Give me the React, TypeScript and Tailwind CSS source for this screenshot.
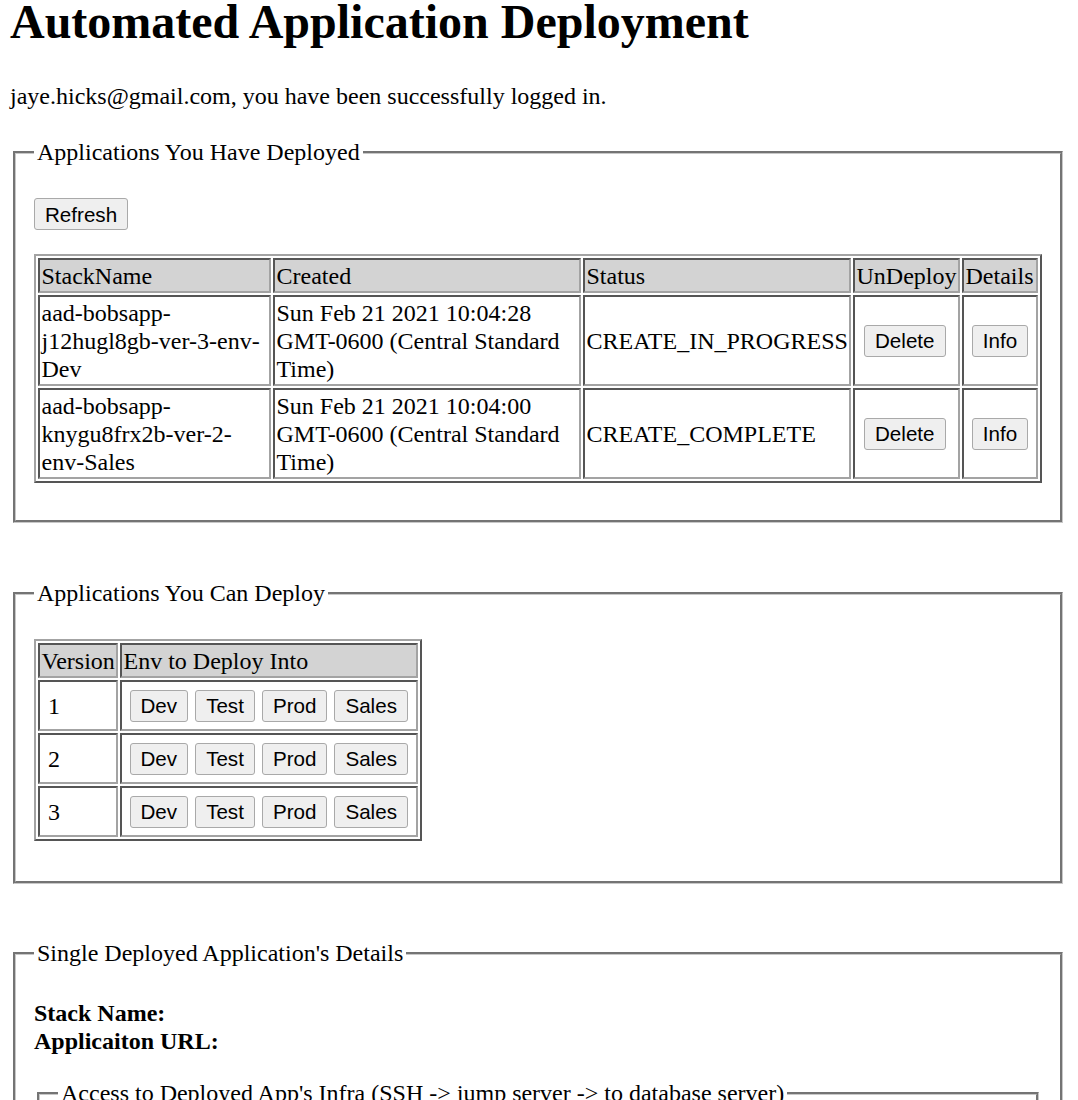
import React from "react";

function Btn({ children }: { children: React.ReactNode }) {
  return (
    <button className="h-[32px] rounded-[3px] border border-[#a9a9a9] bg-[#efefef] px-[10px] font-['Liberation_Sans',Arial,sans-serif] text-[20.6px] leading-[23px] text-black">
      {children}
    </button>
  );
}

const deployed = [
  {
    name: "aad-bobsapp-j12hugl8gb-ver-3-env-Dev",
    created: "Sun Feb 21 2021 10:04:28 GMT-0600 (Central Standard Time)",
    status: "CREATE_IN_PROGRESS",
  },
  {
    name: "aad-bobsapp-knygu8frx2b-ver-2-env-Sales",
    created: "Sun Feb 21 2021 10:04:00 GMT-0600 (Central Standard Time)",
    status: "CREATE_COMPLETE",
  },
];

const envs = ["Dev", "Test", "Prod", "Sales"];

export default function App() {
  return (
    <div className="min-h-[1100px] bg-white px-[10px] font-['Liberation_Serif','Times_New_Roman',serif] text-[24px] leading-[28px] text-black">
      <h1 className="-mt-[6px] text-[48px] font-bold leading-[55px]">Automated Application Deployment</h1>
      <p className="mt-[33px]">jaye.hicks@gmail.com, you have been successfully logged in.</p>

      <fieldset className="mt-[28px] ml-[3px] mr-[5px] border-[3px] border-[#c8c8c8] px-[18px] pb-[37px] [border-style:groove]">
        <legend className="px-[3px]">Applications You Have Deployed</legend>
        <div className="mt-[32px]">
          <Btn>Refresh</Btn>
        </div>
        <table className="mt-[24px] w-full table-fixed border-separate border-spacing-[2px] border-2 border-t-[#a3a3a3] border-l-[#a3a3a3] border-r-[#555] border-b-[#555]">
          <thead>
            <tr>
              <th className="w-[233px] border-2 border-t-[#555] border-l-[#555] border-r-[#a3a3a3] border-b-[#a3a3a3] bg-[#d3d3d3] p-[1.5px] text-left font-normal">StackName</th>
              <th className="w-[308px] border-2 border-t-[#555] border-l-[#555] border-r-[#a3a3a3] border-b-[#a3a3a3] bg-[#d3d3d3] p-[1.5px] text-left font-normal">Created</th>
              <th className="w-[268px] border-2 border-t-[#555] border-l-[#555] border-r-[#a3a3a3] border-b-[#a3a3a3] bg-[#d3d3d3] p-[1.5px] text-left font-normal">Status</th>
              <th className="w-[107px] border-2 border-t-[#555] border-l-[#555] border-r-[#a3a3a3] border-b-[#a3a3a3] bg-[#d3d3d3] p-[1.5px] text-left font-normal">UnDeploy</th>
              <th className="w-[76px] border-2 border-t-[#555] border-l-[#555] border-r-[#a3a3a3] border-b-[#a3a3a3] bg-[#d3d3d3] p-[1.5px] text-left font-normal">Details</th>
            </tr>
          </thead>
          <tbody>
            {deployed.map((d) => (
              <tr key={d.name}>
                <td className="border-2 border-t-[#555] border-l-[#555] border-r-[#a3a3a3] border-b-[#a3a3a3] p-[1.5px] align-middle">{d.name}</td>
                <td className="border-2 border-t-[#555] border-l-[#555] border-r-[#a3a3a3] border-b-[#a3a3a3] p-[1.5px] align-middle">{d.created}</td>
                <td className="border-2 border-t-[#555] border-l-[#555] border-r-[#a3a3a3] border-b-[#a3a3a3] p-[1.5px] align-middle">{d.status}</td>
                <td className="border-2 border-t-[#555] border-l-[#555] border-r-[#a3a3a3] border-b-[#a3a3a3] py-[1.5px] pl-[1.5px] pr-[5px] text-center align-middle">
                  <Btn>Delete</Btn>
                </td>
                <td className="border-2 border-t-[#555] border-l-[#555] border-r-[#a3a3a3] border-b-[#a3a3a3] p-[1.5px] text-center align-middle">
                  <Btn>Info</Btn>
                </td>
              </tr>
            ))}
          </tbody>
        </table>
      </fieldset>

      <fieldset className="mt-[56px] ml-[3px] mr-[5px] border-[3px] border-[#c8c8c8] px-[18px] pb-[40px] [border-style:groove]">
        <legend className="px-[3px]">Applications You Can Deploy</legend>
        <table className="mt-[32px] w-[388px] table-fixed border-separate border-spacing-[2px] border-2 border-t-[#a3a3a3] border-l-[#a3a3a3] border-r-[#555] border-b-[#555]">
          <thead>
            <tr>
              <th className="h-[35px] w-[80px] border-2 border-t-[#555] border-l-[#555] border-r-[#a3a3a3] border-b-[#a3a3a3] bg-[#d3d3d3] p-[1.5px] text-left font-normal">Version</th>
              <th className="h-[35px] w-[298px] border-2 border-t-[#555] border-l-[#555] border-r-[#a3a3a3] border-b-[#a3a3a3] bg-[#d3d3d3] p-[1.5px] text-left font-normal">Env to Deploy Into</th>
            </tr>
          </thead>
          <tbody>
            {[1, 2, 3].map((v) => (
              <tr key={v}>
                <td className="h-[51px] border-2 border-t-[#555] border-l-[#555] border-r-[#a3a3a3] border-b-[#a3a3a3] py-[1.5px] pr-[1.5px] pl-[8px] align-middle">{v}</td>
                <td className="h-[51px] border-2 border-t-[#555] border-l-[#555] border-r-[#a3a3a3] border-b-[#a3a3a3] p-[1.5px] align-middle">
                  <div className="flex gap-[7px] pl-[6px]">
                    {envs.map((e) => (
                      <Btn key={e}>{e}</Btn>
                    ))}
                  </div>
                </td>
              </tr>
            ))}
          </tbody>
        </table>
      </fieldset>

      <fieldset className="mt-[55px] ml-[3px] mr-[5px] border-[3px] border-[#c8c8c8] px-[18px] pb-[37px] [border-style:groove]">
        <legend className="px-[3px]">Single Deployed Application's Details</legend>
        <div className="mt-[32px] font-bold">
          <div>Stack Name:</div>
          <div>Applicaiton URL:</div>
        </div>
        <fieldset className="mt-[24px] mx-[3px] border-[3px] border-[#c8c8c8] px-[18px] pb-[37px] [border-style:groove]">
          <legend className="px-[3px]">Access to Deployed App's Infra (SSH -&gt; jump server -&gt; to database server)</legend>
          <div className="h-[120px]"></div>
        </fieldset>
      </fieldset>
    </div>
  );
}
